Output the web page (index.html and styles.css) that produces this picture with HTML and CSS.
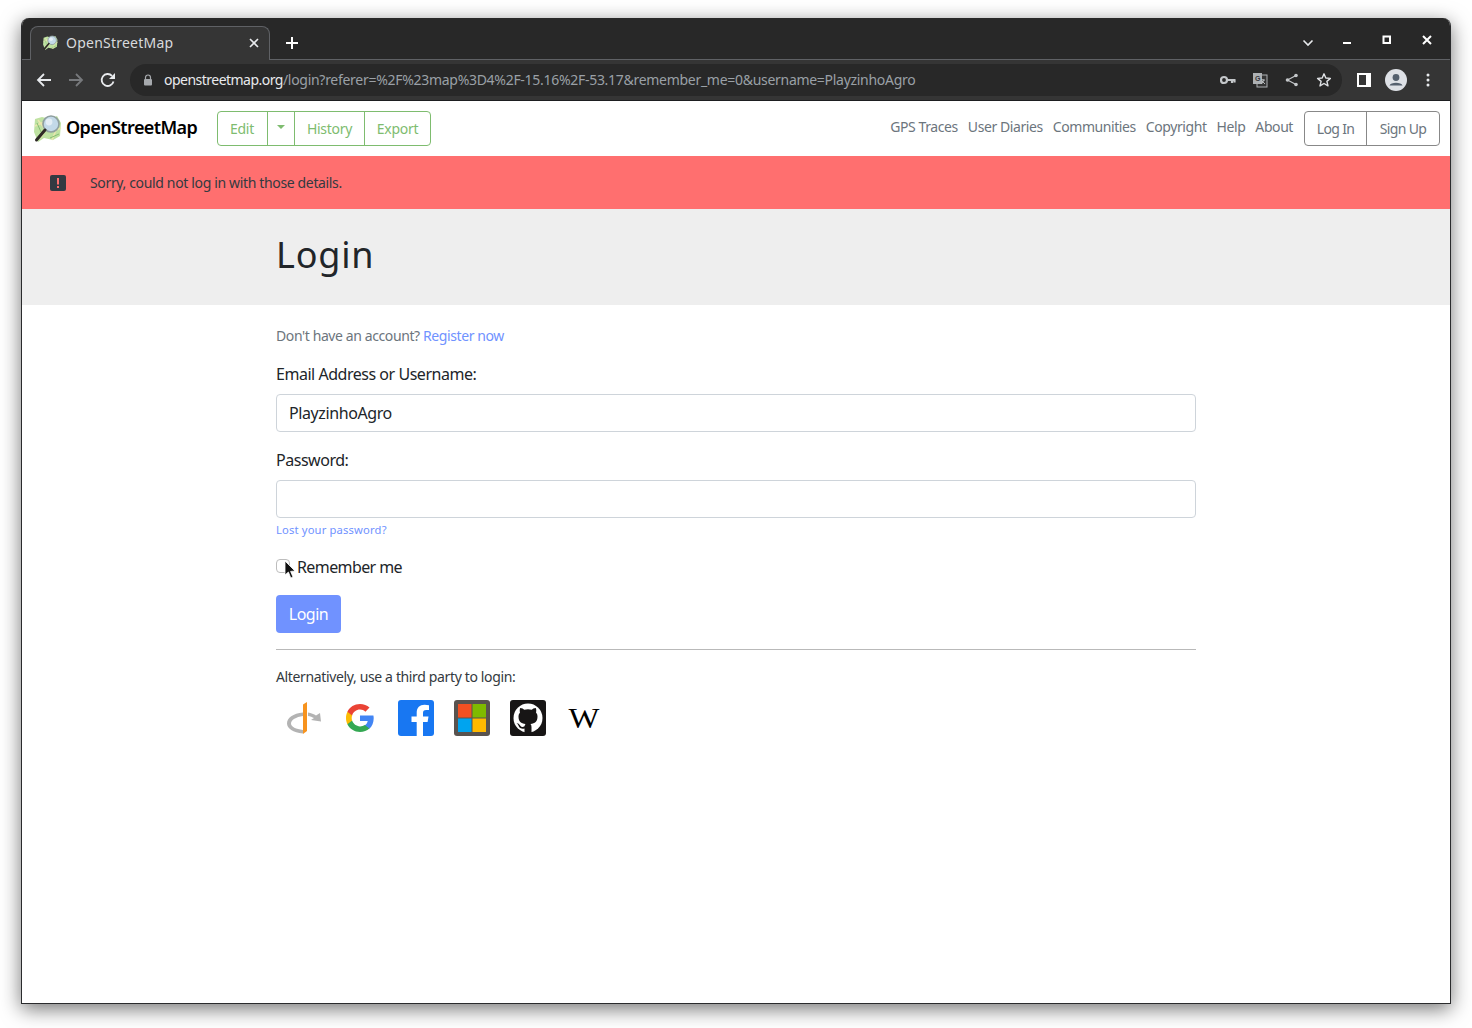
FILE: index.html
```html
<!DOCTYPE html>
<html lang="en">
<head>
<meta charset="utf-8">
<title>OpenStreetMap</title>
<link rel="stylesheet" href="styles.css">
</head>
<body>
<svg class="defs" width="0" height="0">
  <defs>
    <symbol id="osm" viewBox="0 0 30 30">
      <path d="M3 5 L10 3 L18 5 L25 2 L29 9 L28 22 L21 26 L12 24 L6 28 L2 18 Z" fill="#bfe2a2"/>
      <path d="M3 12 L12 8 M8 24 L14 16 M20 26 L24 16 L29 14 M6 6 L12 14" stroke="#ebe7ae" stroke-width="1.5" fill="none"/>
      <path d="M5 9 L9 18 M18 24 L27 20" stroke="#86bd72" stroke-width="1" fill="none"/>
      <circle cx="19" cy="10" r="8" fill="#c3d9e8" stroke="#8f9f9f" stroke-width="1.6"/>
      <circle cx="17" cy="8" r="3.4" fill="#e4eef5"/>
      <path d="M13 16 L4.500 26" stroke="#2e2a26" stroke-width="3" stroke-linecap="round"/>
    </symbol>
  </defs>
</svg>
<div class="window">
  <div class="tabstrip">
    <div class="tab">
      <svg class="favicon" width="16" height="16"><use href="#osm"/></svg>
      <span class="tab-title">OpenStreetMap</span>
      <svg class="tab-close" width="10" height="10" viewBox="0 0 10 10"><path d="M1 1 L9 9 M9 1 L1 9" stroke="#e8eaed" stroke-width="1.6"/></svg>
    </div>
    <svg class="new-tab" width="14" height="14" viewBox="0 0 14 14"><path d="M7 1 V13 M1 7 H13" stroke="#fff" stroke-width="2"/></svg>
    <div class="strip-right">
      <svg class="chev" width="12" height="8" viewBox="0 0 12 8"><path d="M1.5 1.5 L6 6 L10.5 1.5" stroke="#e8eaed" stroke-width="1.6" fill="none"/></svg>
      <svg class="wc wc-min" width="10" height="10" viewBox="0 0 10 10"><path d="M1 8 H9" stroke="#fff" stroke-width="2"/></svg>
      <svg class="wc wc-max" width="10" height="10" viewBox="0 0 10 10"><rect x="1.5" y="1.5" width="6.5" height="6.5" fill="none" stroke="#fff" stroke-width="2"/></svg>
      <svg class="wc wc-close" width="10" height="10" viewBox="0 0 10 10"><path d="M1 1 L9 9 M9 1 L1 9" stroke="#fff" stroke-width="2"/></svg>
    </div>
  </div>
  <div class="toolbar">
    <svg class="nav" width="16" height="16" viewBox="0 0 16 16"><path d="M15 8 H2 M8 2 L2 8 L8 14" stroke="#e8eaed" stroke-width="1.8" fill="none"/></svg>
    <svg class="nav" width="16" height="16" viewBox="0 0 16 16"><path d="M1 8 H14 M8 2 L14 8 L8 14" stroke="#77797c" stroke-width="1.8" fill="none"/></svg>
    <svg class="nav nav-last" width="16" height="16" viewBox="0 0 16 16"><path d="M13.5 9.5 A6 6 0 1 1 12 3.8" stroke="#e8eaed" stroke-width="1.8" fill="none"/><path d="M15 1 V7 H9 Z" fill="#e8eaed"/></svg>
    <div class="omnibox">
      <svg class="lock" width="10" height="12" viewBox="0 0 10 12"><path d="M2.5 5 V3.5 A2.5 2.5 0 0 1 7.5 3.5 V5" stroke="#a6a9ad" stroke-width="1.2" fill="none"/><rect x="1" y="5" width="8" height="6.5" rx="1" fill="#a6a9ad"/></svg>
      <span class="url"><span class="url-host">openstreetmap.org</span>/login?referer=%2F%23map%3D4%2F-15.16%2F-53.17&amp;remember_me=0&amp;username=PlayzinhoAgro</span>
      <div class="omni-icons">
        <svg width="16" height="10" viewBox="0 0 16 10"><circle cx="4" cy="5" r="3" fill="none" stroke="#c4c7ca" stroke-width="2.2"/><path d="M7 5 H15.500 M12 5 V8 M14.500 5 V7.500" stroke="#c4c7ca" stroke-width="2.200"/></svg>
        <svg width="16" height="16" viewBox="0 0 16 16"><rect x="5" y="3" width="10" height="12" fill="#353535" stroke="#aeb1b4"/><rect x="1" y="1" width="9" height="11" fill="#aeb1b4"/><text class="tr-a" x="3" y="9">G</text><path d="M9 8 H13 M11 7 V8 M12 8 L9.500 12 M10 9 L13 12" stroke="#c4c7ca" stroke-width=".9" fill="none"/></svg>
        <svg width="16" height="14" viewBox="0 0 14 14"><circle cx="11" cy="2.500" r="1.800" fill="#c4c7ca"/><circle cx="2.500" cy="7" r="1.800" fill="#c4c7ca"/><circle cx="11" cy="11.500" r="1.800" fill="#c4c7ca"/><path d="M11 2.500 L2.500 7 L11 11.500" stroke="#c4c7ca" stroke-width="1.200" fill="none"/></svg>
        <svg width="16" height="16" viewBox="0 0 16 16"><path d="M8 1.800 L9.800 6 L14.400 6.400 L10.900 9.400 L12 13.900 L8 11.500 L4 13.900 L5.100 9.400 L1.600 6.400 L6.200 6 Z" fill="none" stroke="#dfe1e4" stroke-width="1.400" stroke-linejoin="round"/></svg>
      </div>
    </div>
    <div class="tool-right">
      <svg class="side" width="14" height="14" viewBox="0 0 14 14"><rect x="0" y="0" width="14" height="14" fill="#fff"/><rect x="2" y="2" width="7" height="10" fill="#353535"/></svg>
      <svg class="avatar" width="22" height="22" viewBox="0 0 22 22"><circle cx="11" cy="11" r="11" fill="#dee1e6"/><circle cx="11" cy="8.500" r="3.400" fill="#54606e"/><path d="M4.500 16.500 C5.500 12.800 16.500 12.800 17.500 16.500 Z" fill="#54606e"/></svg>
      <svg class="kebab" width="4" height="14" viewBox="0 0 4 14"><circle cx="2" cy="2" r="1.500" fill="#e8eaed"/><circle cx="2" cy="7" r="1.500" fill="#e8eaed"/><circle cx="2" cy="12" r="1.500" fill="#e8eaed"/></svg>
    </div>
  </div>
  <div class="page">
    <header class="site-header">
      <a class="brand"><svg class="brand-logo" width="30" height="30"><use href="#osm"/></svg><span>OpenStreetMap</span></a>
      <div class="btn-group green">
        <a class="btn btn-edit">Edit</a>
        <a class="btn btn-caret"><span class="caret"></span></a>
        <a class="btn btn-history">History</a>
        <a class="btn btn-export">Export</a>
      </div>
      <nav class="site-nav">
        <a>GPS Traces</a><a>User Diaries</a><a>Communities</a><a>Copyright</a><a>Help</a><a>About</a>
      </nav>
      <div class="btn-group grey">
        <a class="btn btn-login">Log In</a>
        <a class="btn btn-signup">Sign Up</a>
      </div>
    </header>
    <div class="alert">
      <svg class="alert-icon" width="16" height="16" viewBox="0 0 16 16"><rect width="16" height="16" rx="2" fill="#333a42"/><rect x="7" y="3" width="2" height="6.500" fill="#ff6f6f"/><rect x="7" y="11" width="2" height="2" fill="#ff6f6f"/></svg>
      <span>Sorry, could not log in with those details.</span>
    </div>
    <div class="title-band"><h1>Login</h1></div>
    <main class="content">
      <p class="register">Don't have an account? <a>Register now</a></p>
      <label class="field-label">Email Address or Username:</label>
      <div class="input">PlayzinhoAgro</div>
      <label class="field-label">Password:</label>
      <div class="input"></div>
      <a class="lost">Lost your password?</a>
      <div class="remember">
        <span class="checkbox"></span>
        <span class="remember-text">Remember me</span>
        <svg class="cursor" width="12" height="19" viewBox="0 0 12 19"><path d="M1 1 V15 L4.400 12 L6.800 18 L9 17 L6.600 11.400 L11 11 Z" fill="#111" stroke="#fff" stroke-width=".8"/></svg>
      </div>
      <a class="submit">Login</a>
      <hr class="rule">
      <p class="alt">Alternatively, use a third party to login:</p>
      <div class="providers">
        <svg class="provider" width="36" height="36" viewBox="0 0 36 36">
          <path d="M17 12.500 C7 13.500 1 18 1 23.500 C1 28.500 7 32.500 17 33.500 L17 30 C10 29 5 27 5 23.500 C5 20 10 17 17 16 Z" fill="#b3b3b3"/>
          <path d="M22 12.500 C25 13 28 14 30 15.500 L34 13 L35 21.500 L25 20 L28 18 C26.500 17.200 24 16.300 22 16 Z" fill="#b3b3b3"/>
          <path d="M17 4.500 L21 2 V31 L17 34 Z" fill="#f7931e"/>
        </svg>
        <svg class="provider" width="36" height="36" viewBox="0 0 36 36">
          <path d="M31.700 18.300 c0-1-.1-2-.3-2.900 H18 v5.500 h7.700 c-.3 1.800-1.300 3.300-2.900 4.300 v3.600 h4.600 c2.700-2.500 4.300-6.200 4.300-10.500z" fill="#4285f4"/>
          <path d="M18 32 c3.800 0 7-1.300 9.400-3.400 l-4.600-3.600 c-1.300.9-2.900 1.400-4.800 1.400 -3.700 0-6.800-2.500-7.900-5.800 H5.400 v3.700 C7.700 28.900 12.500 32 18 32z" fill="#34a853"/>
          <path d="M10.100 20.600 c-.3-.8-.4-1.700-.4-2.600 s.2-1.800.4-2.600 v-3.700 H5.400 C4.500 13.600 4 15.700 4 18 s.5 4.400 1.400 6.300z" fill="#fbbc05"/>
          <path d="M18 9.600 c2.100 0 4 .7 5.400 2.100 l4.100-4.100 C25 5.300 21.800 4 18 4 12.500 4 7.700 7.100 5.400 11.700 l4.700 3.700 c1.100-3.300 4.200-5.800 7.900-5.800z" fill="#ea4335"/>
        </svg>
        <svg class="provider" width="36" height="36" viewBox="0 0 36 36">
          <rect width="36" height="36" rx="3" fill="#1877f2"/>
          <path d="M25 36 V22 h4.600 l.9-5.500 H25 V13 c0-1.700.8-3 3.200-3 H31 V5.200 c-1.200-.2-2.800-.4-4.500-.4 -4.700 0-7.800 2.800-7.800 8 v3.700 H13.500 V22 h5.200 v14z" fill="#fff"/>
        </svg>
        <svg class="provider" width="36" height="36" viewBox="0 0 36 36">
          <rect width="36" height="36" rx="3" fill="#59534f"/>
          <rect x="4" y="4" width="13.500" height="13.500" fill="#f25022"/>
          <rect x="18.500" y="4" width="13.500" height="13.500" fill="#7fba00"/>
          <rect x="4" y="18.500" width="13.500" height="13.500" fill="#00a4ef"/>
          <rect x="18.500" y="18.500" width="13.500" height="13.500" fill="#ffb900"/>
        </svg>
        <svg class="provider" width="36" height="36" viewBox="0 0 36 36">
          <rect width="36" height="36" rx="3" fill="#171515"/>
          <circle cx="18" cy="18" r="14.500" fill="#fff"/>
          <path d="M14.500 33 V28.500 C10 29.500 9 26.800 8.500 25.500 C8 24.300 7 23.500 6.500 23.200 C9 23 10 25.300 10.500 26 C11.500 27.300 13.200 27 14.500 26.300 C14.700 25.200 15.100 24.500 15.500 24 C11 23.500 8.500 21.500 8.500 16.500 C8.500 15 9 13.600 10 12.500 C9.700 11.500 9.500 9.800 10.200 8 C12 8 13.500 9 14.300 9.700 C16.500 9 19.500 9 21.700 9.700 C22.500 9 24 8 25.800 8 C26.500 9.800 26.300 11.500 26 12.500 C27 13.600 27.500 15 27.500 16.500 C27.500 21.500 25 23.500 20.500 24 C21.200 24.700 21.500 25.700 21.500 27 V33 Z" fill="#171515"/>
        </svg>
        <span class="provider wiki">W</span>
      </div>
    </main>
  </div>
</div>
</body>
</html>
```

FILE: styles.css
```css
* { box-sizing: border-box; }
html, body { margin: 0; padding: 0; height: 100%; background: #fff; overflow: hidden; }
body { font-family: "Noto Sans", sans-serif; padding: 18px 21px 24px; }
.defs { position: absolute; }
.window {
  height: 986px;
  border: 1px solid #2a2b2d;
  border-top: 0;
  border-radius: 8px 8px 0 0;
  background: #fff;
  box-shadow: 0 5px 20px rgba(0, 0, 0, .55);
  display: flex;
  flex-direction: column;
  overflow: hidden;
}
.tabstrip {
  height: 42px;
  background: #282828;
  display: flex;
  align-items: flex-end;
  padding-left: 8px;
  border-bottom: 1px solid #5f6165;
  flex: none;
}
.tab {
  width: 240px;
  height: 34px;
  margin-bottom: -1px;
  background: #353535;
  border: 1px solid #5f6165;
  border-bottom: 0;
  border-radius: 8px 8px 0 0;
  display: flex;
  align-items: center;
  padding: 0 10px 2px 11px;
  color: #d8dadd;
  font-size: 14px;
}
.favicon { flex: none; }
.tab-title { margin-left: 8px; flex: 1; letter-spacing: .23px; }
.new-tab { margin: 0 0 9px 15px; }
.strip-right { margin-left: auto; display: flex; align-items: flex-start; height: 42px; padding-top: 20px; }
.chev { margin-right: 28px; margin-top: 2px; }
.wc { margin-top: -2px; }
.wc-min { margin-right: 30px; }
.wc-max { margin-right: 30px; }
.wc-close { margin-right: 18px; }
.toolbar {
  height: 41px;
  background: #353535;
  border-bottom: 1px solid #1d1e20;
  display: flex;
  align-items: center;
  padding: 0 0 0 14px;
  flex: none;
}
.nav { margin-right: 16px; flex: none; }
.nav-last { margin-right: 14px; }
.omnibox {
  width: 1212px;
  height: 32px;
  border-radius: 16px;
  background: #282828;
  display: flex;
  align-items: center;
  padding: 0 10px 0 13px;
  flex: none;
}
.lock { flex: none; }
.url { margin-left: 11px; font-size: 14px; color: #9aa0a6; white-space: nowrap; letter-spacing: -.29px; position: relative; bottom: 1px; }
.url-host { color: #e8eaed; letter-spacing: -.52px; }
.omni-icons { margin-left: auto; display: flex; align-items: center; gap: 16px; }
.tr-a { font: bold 7px "Liberation Sans", sans-serif; fill: #35363a; }
.tool-right { display: flex; align-items: center; margin-left: 15px; }
.side { margin-right: 14px; }
.avatar { margin-right: 19px; }
.page { flex: 1; display: flex; flex-direction: column; min-height: 0; }
.site-header {
  height: 55px;
  display: flex;
  align-items: center;
  padding: 0 10px;
  flex: none;
}
.brand { display: flex; align-items: center; font-size: 18px; font-weight: 600; color: #000; width: 185px; letter-spacing: -.6px; }
.brand span { position: relative; bottom: 2px; }
.brand-logo { margin-right: 4px; flex: none; }
.btn-group { display: flex; height: 35px; border-radius: 4px; font-size: 14px; }
.btn-group.green { border: 1px solid #7ebc6f; color: #7ebc6f; letter-spacing: -.3px; }
.btn-group.grey { border: 1px solid #888; color: #6c757d; letter-spacing: -.65px; }
.btn { display: flex; align-items: center; justify-content: center; }
.green .btn + .btn { border-left: 1px solid #7ebc6f; }
.grey .btn + .btn { border-left: 1px solid #888; }
.btn-edit { width: 49px; padding-right: 1px; }
.btn-caret { width: 27px; }
.btn-history { width: 70px; }
.btn-export { width: 66px; }
.btn-login { width: 61px; }
.btn-signup { width: 73px; }
.caret { width: 0; height: 0; border: 4px solid transparent; border-top-color: #7ebc6f; border-bottom: 0; margin-bottom: 3px; }
.site-nav { margin-left: auto; display: flex; gap: 10px; font-size: 14px; color: #6c757d; margin-right: 11px; padding-bottom: 5px; letter-spacing: -.42px; }
.alert {
  height: 53px;
  background: #ff6f6f;
  display: flex;
  align-items: center;
  padding-left: 28px;
  font-size: 14px;
  color: #343a40;
  flex: none;
}
.alert span { margin-left: 24px; letter-spacing: -.35px; }
.title-band { height: 96px; background: #eee; padding: 0 254px; flex: none; display: flex; align-items: center; }
.title-band h1 { margin: 0; font-size: 36px; font-weight: 400; color: #212529; line-height: 1.2; position: relative; bottom: 2px; letter-spacing: .8px; }
.content { width: 920px; margin: 0 auto; display: flex; flex-direction: column; align-items: stretch; }
.register { margin: 21px 0 0; font-size: 14px; line-height: 20px; color: #6c757d; letter-spacing: -.4px; }
.register a, .lost { color: #7092ff; }
.field-label { display: block; margin-top: 16px; font-size: 16px; line-height: 24px; color: #212529; letter-spacing: -.47px; }
.input {
  margin-top: 8px;
  height: 38px;
  border: 1px solid #ced4da;
  border-radius: 4px;
  padding: 0 12px;
  font-size: 16px;
  line-height: 36px;
  color: #212529;
  letter-spacing: -.4px;
}
.lost { font-size: 11.2px; line-height: 17px; margin-top: 3px; letter-spacing: .17px; }
.remember { position: relative; margin-top: 17px; display: flex; align-items: center; font-size: 16px; line-height: 24px; color: #212529; height: 24px; }
.remember-text { letter-spacing: -.6px; }
.checkbox { width: 14px; height: 14px; border: 1px solid #bdbdbd; border-radius: 4px; background: #fff; margin-right: 7px; position: relative; bottom: 1px; }
.cursor { position: absolute; left: 8px; top: 5px; }
.submit {
  margin-top: 16px;
  align-self: flex-start;
  width: 65px;
  height: 38px;
  text-align: center;
  background: #7092ff;
  color: #fff;
  border-radius: 4px;
  font-size: 16px;
  line-height: 38px;
  letter-spacing: -.5px;
}
.rule { margin: 16px 0 0; width: 100%; border: 0; border-top: 1px solid #b9b9b9; }
.alt { margin: 17px 0 0; font-size: 14px; line-height: 20px; color: #343a40; letter-spacing: -.36px; }
.providers { display: flex; gap: 20px; margin-top: 13px; padding-left: 10px; }
.provider { flex: none; display: block; }
.wiki { width: 36px; height: 36px; font-family: "Liberation Serif", serif; font-size: 29px; line-height: 36px; text-align: center; color: #000; transform: scaleX(1.13); }
```
